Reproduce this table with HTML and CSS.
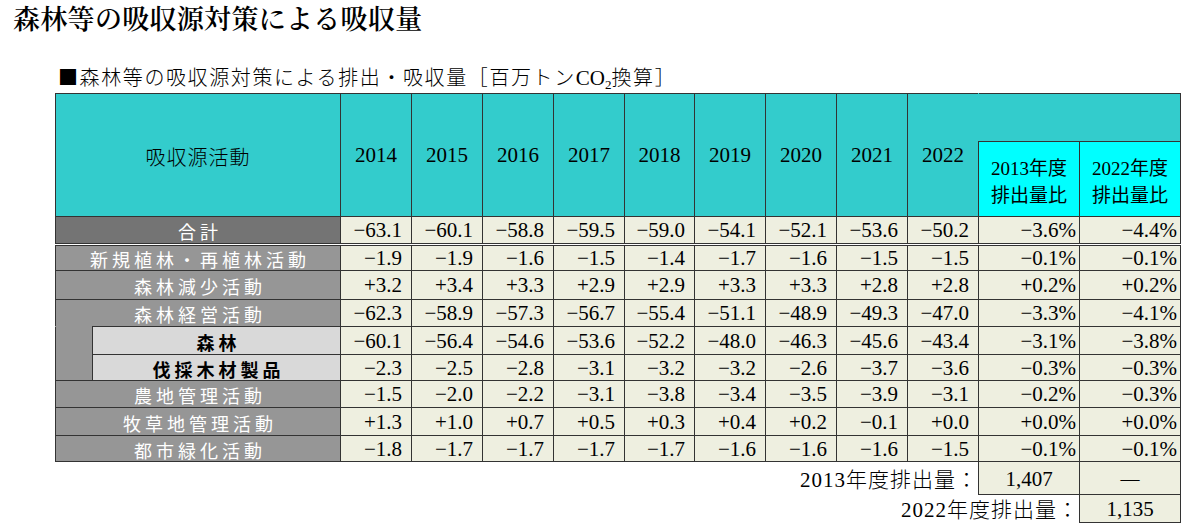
FILE: index.html
```html
<!DOCTYPE html>
<html lang="ja">
<head>
<meta charset="utf-8">
<title>森林等の吸収源対策による吸収量</title>
<link rel="stylesheet" href="styles.css">
</head>
<body>
<h1 class="title">森林等の吸収源対策による吸収量</h1>
<p class="subtitle">■森林等の吸収源対策による排出・吸収量［百万トン<span class="latin">CO<sub>2</sub></span>換算］</p>
<table class="tbl">
<colgroup>
<col class="c-stub"><col class="c-label">
<col class="c-y"><col class="c-y"><col class="c-y"><col class="c-y"><col class="c-y70">
<col class="c-y"><col class="c-y"><col class="c-y"><col class="c-y">
<col class="c-r"><col class="c-r">
</colgroup>
<thead>
<tr class="h1">
<th colspan="2" rowspan="2" class="h-act">吸収源活動</th>
<th rowspan="2" class="h-yr">2014</th>
<th rowspan="2" class="h-yr">2015</th>
<th rowspan="2" class="h-yr">2016</th>
<th rowspan="2" class="h-yr">2017</th>
<th rowspan="2" class="h-yr">2018</th>
<th rowspan="2" class="h-yr">2019</th>
<th rowspan="2" class="h-yr">2020</th>
<th rowspan="2" class="h-yr">2021</th>
<th rowspan="2" class="h-yr h-last">2022</th>
<th colspan="2" class="h-blank"></th>
</tr>
<tr class="h2">
<th class="h-ratio h-ratio-first">2013年度<br>排出量比</th>
<th class="h-ratio">2022年度<br>排出量比</th>
</tr>
</thead>
<tbody>
<tr class="total">
<th colspan="2" class="lab lab-dark">合計</th>
<td>−63.1</td><td>−60.1</td><td>−58.8</td><td>−59.5</td><td>−59.0</td><td>−54.1</td><td>−52.1</td><td>−53.6</td><td>−50.2</td>
<td class="pct">−3.6%</td><td class="pct">−4.4%</td>
</tr>
<tr class="r26">
<th colspan="2" class="lab">新規植林・再植林活動</th>
<td>−1.9</td><td>−1.9</td><td>−1.6</td><td>−1.5</td><td>−1.4</td><td>−1.7</td><td>−1.6</td><td>−1.5</td><td>−1.5</td>
<td class="pct">−0.1%</td><td class="pct">−0.1%</td>
</tr>
<tr class="r29">
<th colspan="2" class="lab">森林減少活動</th>
<td>+3.2</td><td>+3.4</td><td>+3.3</td><td>+2.9</td><td>+2.9</td><td>+3.3</td><td>+3.3</td><td>+2.8</td><td>+2.8</td>
<td class="pct">+0.2%</td><td class="pct">+0.2%</td>
</tr>
<tr class="r27">
<th colspan="2" class="lab lab-open">森林経営活動</th>
<td>−62.3</td><td>−58.9</td><td>−57.3</td><td>−56.7</td><td>−55.4</td><td>−51.1</td><td>−48.9</td><td>−49.3</td><td>−47.0</td>
<td class="pct">−3.3%</td><td class="pct">−4.1%</td>
</tr>
<tr class="r28">
<th rowspan="2" class="stub"></th>
<th class="sub sub-first">森林</th>
<td>−60.1</td><td>−56.4</td><td>−54.6</td><td>−53.6</td><td>−52.2</td><td>−48.0</td><td>−46.3</td><td>−45.6</td><td>−43.4</td>
<td class="pct">−3.1%</td><td class="pct">−3.8%</td>
</tr>
<tr class="r26">
<th class="sub">伐採木材製品</th>
<td>−2.3</td><td>−2.5</td><td>−2.8</td><td>−3.1</td><td>−3.2</td><td>−3.2</td><td>−2.6</td><td>−3.7</td><td>−3.6</td>
<td class="pct">−0.3%</td><td class="pct">−0.3%</td>
</tr>
<tr class="r27">
<th colspan="2" class="lab">農地管理活動</th>
<td>−1.5</td><td>−2.0</td><td>−2.2</td><td>−3.1</td><td>−3.8</td><td>−3.4</td><td>−3.5</td><td>−3.9</td><td>−3.1</td>
<td class="pct">−0.2%</td><td class="pct">−0.3%</td>
</tr>
<tr class="r28">
<th colspan="2" class="lab">牧草地管理活動</th>
<td>+1.3</td><td>+1.0</td><td>+0.7</td><td>+0.5</td><td>+0.3</td><td>+0.4</td><td>+0.2</td><td>−0.1</td><td>+0.0</td>
<td class="pct">+0.0%</td><td class="pct">+0.0%</td>
</tr>
<tr class="r26">
<th colspan="2" class="lab">都市緑化活動</th>
<td>−1.8</td><td>−1.7</td><td>−1.7</td><td>−1.7</td><td>−1.7</td><td>−1.6</td><td>−1.6</td><td>−1.6</td><td>−1.5</td>
<td class="pct">−0.1%</td><td class="pct">−0.1%</td>
</tr>
<tr class="sum1">
<td colspan="11" class="sum-lab">2013年度排出量：</td>
<td class="sum-v">1,407</td>
<td class="sum-v sum-dash">—</td>
</tr>
<tr class="sum2">
<td colspan="12" class="sum-lab">2022年度排出量：</td>
<td class="sum-v">1,135</td>
</tr>
</tbody>
</table>
</body>
</html>
```

FILE: styles.css
```css
body {
  margin: 0;
  background: #ffffff;
  color: #000000;
  font-family: "Noto Sans CJK JP", sans-serif;
}

.title {
  margin: 0;
  padding: 2px 0 0 13px;
  font-family: "Noto Serif CJK JP", "Noto Sans CJK JP", serif;
  font-size: 27px;
  font-weight: 600;
  letter-spacing: 0.3px;
  line-height: 32px;
  height: 32px;
}

.subtitle {
  margin: 31px 0 4px 58px;
  font-family: "Noto Sans CJK JP", sans-serif;
  font-size: 20px;
  font-weight: 300;
  letter-spacing: 1.6px;
  line-height: 24px;
  height: 24px;
}

.subtitle .latin {
  font-family: "Liberation Serif", serif;
  font-size: 21px;
  font-weight: normal;
  letter-spacing: 0;
}

.subtitle sub {
  font-size: 13px;
  vertical-align: -4px;
  line-height: 0;
}

.tbl {
  border-collapse: collapse;
  table-layout: fixed;
  width: 1125px;
  margin-left: 55px;
}

.c-stub { width: 37px; }
.c-label { width: 248px; }
.c-y { width: 71px; }
.c-y70 { width: 70px; }
.c-r { width: 101px; }

.tbl th,
.tbl td {
  border: 1px solid #333333;
  padding: 0;
  white-space: nowrap;
  overflow: hidden;
}

.h1 { height: 48px; }
.h2 { height: 75px; }

.tbl thead th {
  background: #33cccc;
  font-weight: normal;
  text-align: center;
  vertical-align: middle;
}

.tbl .h-act {
  font-size: 20px;
  font-weight: 300;
  letter-spacing: 1px;
  padding-top: 2px;
}

.tbl .h-yr {
  font-family: "Liberation Serif", serif;
  font-size: 21px;
}

.tbl .h-last { border-right: 1px solid #33cccc; }

.tbl .h-blank { border-left: 1px solid #33cccc; }

.tbl thead .h-ratio {
  background: #00ffff;
  font-family: "Liberation Serif", "Noto Sans CJK JP", sans-serif;
  font-size: 19px;
  line-height: 27px;
  padding-top: 6px;
}

.tbl .h-ratio-first { border-left: 1px double #333333; }

tbody tr { height: 27px; }
tbody tr.total { height: 28px; }
tbody tr.r26 { height: 26px; }
tbody tr.r27 { height: 27px; }
tbody tr.r28 { height: 28px; }
tbody tr.r29 { height: 29px; }

.tbl .total th,
.tbl .total td {
  border-bottom: 3px double #333333;
}

.tbl .lab {
  background: #969696;
  color: #ffffff;
  font-weight: normal;
  font-size: 18px;
  line-height: 22px;
  letter-spacing: 4px;
  padding-left: 4px;
  padding-top: 2px;
  text-align: center;
}

.tbl .lab-dark { background: #747474; }

.tbl .lab-open { border-bottom: 1px solid #969696; }

.tbl .stub {
  background: #969696;
  border-top: 1px solid #969696;
}

.tbl .sub {
  background: #d9d9d9;
  color: #000000;
  font-weight: bold;
  font-size: 18px;
  line-height: 22px;
  letter-spacing: 4px;
  padding-left: 4px;
  padding-top: 2px;
  text-align: center;
}

.tbl .sub-first { border-top: 1px double #333333; }

.tbl tbody td {
  background: #eeefe0;
  text-align: right;
  font-family: "Liberation Serif", serif;
  font-size: 21px;
  line-height: 24px;
  padding-right: 9px;
}

.tbl td.pct { padding-right: 3px; }

tr.sum1 { height: 33px; }
tr.sum2 { height: 27px; }

.tbl td.sum-lab {
  border: none;
  background: transparent;
  text-align: right;
  font-family: "Liberation Serif", "Noto Sans CJK JP", sans-serif;
  font-size: 21px;
  font-weight: 300;
  letter-spacing: 1px;
  padding-right: 0;
  padding-top: 3px;
}

.tbl td.sum-v {
  text-align: center;
  padding-right: 0;
  padding-top: 2px;
}

.tbl td.sum-dash {
  font-family: "Liberation Serif", serif;
  font-size: 19px;
}
```
